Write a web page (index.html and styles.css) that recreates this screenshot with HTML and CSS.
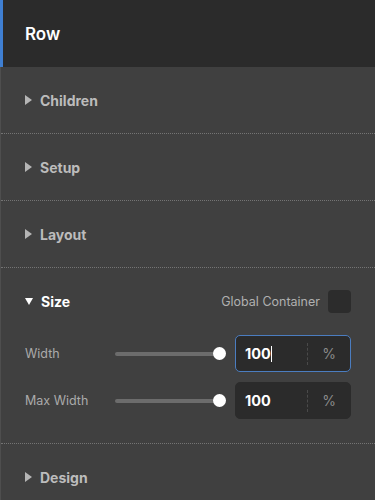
FILE: index.html
```html
<!DOCTYPE html>
<html lang="en">
<head>
  <meta charset="UTF-8" />
  <meta name="viewport" content="width=device-width, initial-scale=1.0"/>
  <title>Row settings</title>
  <link rel="stylesheet" href="styles.css">
</head>
<body>
  <div class="panel-header">Row</div>

  <div class="panel">
    <div class="section">
      <div class="section-title"><span class="caret"></span>Children</div>
    </div>
    <div class="section">
      <div class="section-title"><span class="caret"></span>Setup</div>
    </div>
    <div class="section">
      <div class="section-title"><span class="caret"></span>Layout</div>
    </div>

    <div class="section open">
      <div class="open-head">
        <div class="section-title active"><span class="caret down"></span>Size</div>
        <label class="check-label">Global Container <span class="checkbox"></span></label>
      </div>
      <div class="field">
        <span class="field-label">Width</span>
        <div class="slider"><div class="track"></div><div class="thumb"></div></div>
        <div class="num-input focused">
          <span class="num-value">100<span class="cursor"></span></span>
          <span class="unit">%</span>
        </div>
      </div>
      <div class="field">
        <span class="field-label">Max Width</span>
        <div class="slider"><div class="track"></div><div class="thumb"></div></div>
        <div class="num-input">
          <span class="num-value">100</span>
          <span class="unit">%</span>
        </div>
      </div>
    </div>

    <div class="section last">
      <div class="section-title"><span class="caret"></span>Design</div>
    </div>
  </div>
</body>
</html>
```

FILE: styles.css
```css
body {
  margin: 0;
  background: #404040;
  font-family: Inter, "Liberation Sans", sans-serif;
  color: #bdbdbd;
  height: 500px;
  overflow: hidden;
}
.panel-header {
  height: 67px;
  box-sizing: border-box;
  background: #2b2b2b;
  border-left: 3px solid #3f7fd2;
  color: #fff;
  font-size: 17px;
  font-weight: 600;
  padding-left: 22px;
  display: flex;
  align-items: center;
}
.panel {
  border-left: 1px solid #4e4e4e;
  min-height: 433px;
}
.section {
  border-bottom: 1px dotted #747474;
}
.section.last {
  border-bottom: none;
}
.section-title {
  height: 66px;
  display: flex;
  align-items: center;
  padding-left: 24px;
  font-size: 14px;
  font-weight: 700;
  color: #bcbcbc;
}
.section-title.active {
  height: auto;
  color: #fff;
}
.caret {
  width: 0;
  height: 0;
  border-top: 5px solid transparent;
  border-bottom: 5px solid transparent;
  border-left: 7px solid #b5b5b5;
  margin-right: 8px;
}
.caret.down {
  border-left: 4px solid transparent;
  border-right: 4px solid transparent;
  border-top: 7px solid #fff;
  border-bottom: none;
  margin-right: 8px;
}
.open {
  padding: 21px 24px 24px 0;
}
.open-head {
  display: flex;
  align-items: center;
  justify-content: space-between;
  height: 24px;
  margin-bottom: 22px;
}
.check-label {
  display: flex;
  align-items: center;
  gap: 8px;
  font-size: 12.5px;
  color: #b0b0b0;
}
.checkbox {
  width: 23px;
  height: 23px;
  border-radius: 4px;
  background: #2c2c2c;
}
.field {
  display: flex;
  align-items: center;
  padding-left: 24px;
  margin-bottom: 10px;
}
.field:last-child {
  margin-bottom: 0;
}
.field-label {
  width: 90px;
  font-size: 12.5px;
  color: #ababab;
}
.slider {
  position: relative;
  width: 106px;
  height: 14px;
  margin-right: 14px;
  display: flex;
  align-items: center;
}
.track {
  width: 100%;
  height: 4px;
  border-radius: 2px;
  background: #6c6c6c;
}
.thumb {
  position: absolute;
  right: -5px;
  top: 0;
  width: 13px;
  height: 13px;
  border-radius: 50%;
  background: #fff;
}
.num-input {
  width: 116px;
  height: 37px;
  box-sizing: border-box;
  background: #2b2b2b;
  border: 1px solid #2b2b2b;
  border-radius: 5px;
  display: flex;
  align-items: center;
}
.num-input.focused {
  border: 1.5px solid #4b7dc0;
}
.num-value {
  flex: 1;
  padding-left: 9px;
  height: 22px;
  display: flex;
  align-items: center;
  border-right: 1px dashed #4a4a4a;
  font-size: 14.5px;
  font-weight: 700;
  color: #fff;
}
.cursor {
  width: 1px;
  height: 16px;
  background: #fff;
}
.unit {
  width: 42px;
  text-align: center;
  font-size: 14px;
  color: #8a8a8a;
}
```
